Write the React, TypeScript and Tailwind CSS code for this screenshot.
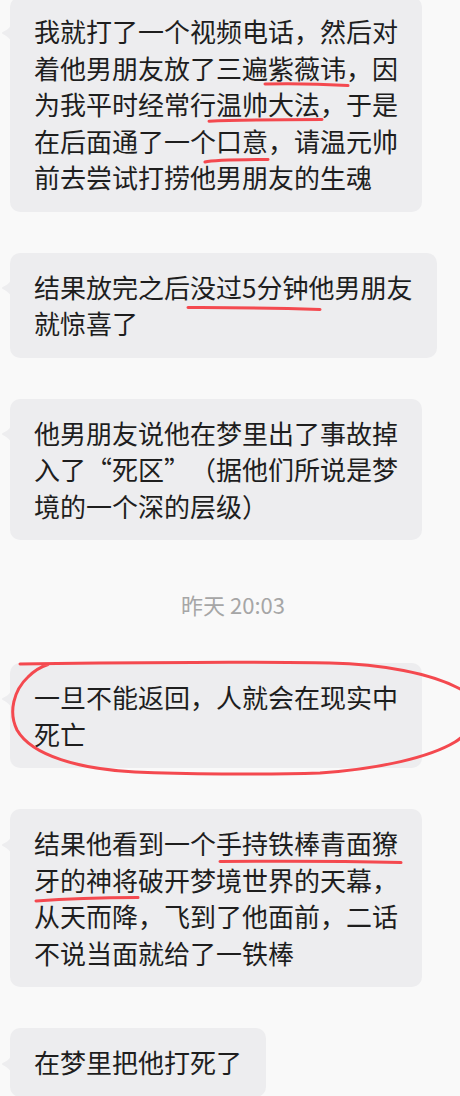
import React from "react";

const FONT = { fontFamily: '"Noto Sans CJK SC", "Noto Sans", sans-serif' };

function Tail() {
  return (
    <svg
      className="absolute left-[-9px] top-[27.5px]"
      width="10"
      height="16"
      viewBox="0 0 10 16"
    >
      <path
        d="M10 0 C 8 4, 4 6, 1.6 7.1 Q 0.4 8, 1.6 8.9 C 4 10, 8 12, 10 16 Z"
        fill="#ededef"
      />
    </svg>
  );
}

function Bubble({ lines, w }: { lines: string[]; w: string }) {
  return (
    <div
      className={`relative rounded-[10px] bg-[#ededef] px-6 py-4 text-[26px] leading-[36.5px] text-[#1e1e1e] ${w}`}
    >
      <Tail />
      {lines.map((l, i) => (
        <div key={i} className="whitespace-nowrap [text-spacing-trim:space-all]">
          {l}
        </div>
      ))}
    </div>
  );
}

export default function App() {
  return (
    <div
      lang="zh-CN"
      className="relative w-[460px] h-[1096px] overflow-hidden bg-[#f9f9f9]"
      style={FONT}
    >
      <div className="flex flex-col items-start gap-[41px] pl-[10px] mt-[-3px]">
        <Bubble
          w="w-[412px]"
          lines={[
            "我就打了一个视频电话，然后对",
            "着他男朋友放了三遍紫薇讳，因",
            "为我平时经常行温帅大法，于是",
            "在后面通了一个口意，请温元帅",
            "前去尝试打捞他男朋友的生魂",
          ]}
        />
        <Bubble
          w="w-[427px]"
          lines={["结果放完之后没过5分钟他男朋友", "就惊喜了"]}
        />
        <Bubble
          w="w-[412px]"
          lines={[
            "他男朋友说他在梦里出了事故掉",
            "入了“死区”（据他们所说是梦",
            "境的一个深的层级）",
          ]}
        />
        <div className="self-stretch pr-[4px] pt-[8px] pb-[3px] text-center text-[22px] leading-[30px] text-[#a6a6a6]">
          昨天 20:03
        </div>
        <Bubble
          w="w-[412px]"
          lines={["一旦不能返回，人就会在现实中", "死亡"]}
        />
        <Bubble
          w="w-[412px]"
          lines={[
            "结果他看到一个手持铁棒青面獠",
            "牙的神将破开梦境世界的天幕，",
            "从天而降，飞到了他面前，二话",
            "不说当面就给了一铁棒",
          ]}
        />
        <Bubble w="w-[256px]" lines={["在梦里把他打死了"]} />
      </div>

      <svg
        className="pointer-events-none absolute left-0 top-0"
        width="460"
        height="1096"
        viewBox="0 0 460 1096"
        fill="none"
        stroke="#f4494f"
        strokeLinecap="round"
        strokeLinejoin="round"
      >
        <path d="M265 84 Q 305 83 348 85.6" strokeWidth="3" />
        <path d="M209 121.3 Q 240 119.8 322 119.6" strokeWidth="3" />
        <path d="M205 162 Q 214 159.6 268 159.4" strokeWidth="3" />
        <path d="M188 307.6 Q 260 307.4 320 309.4" strokeWidth="3" />
        <path d="M220 861.6 Q 320 860.6 401 862.6" strokeWidth="3" />
        <path d="M36 901 Q 80 898 138 897.6" strokeWidth="3" />
        <path
          d="M20 664 C 120 662, 280 662, 330 663 C 380 664, 432 673, 462 690 C 478 700, 478 728, 455 742 C 430 757, 380 769, 320 773 C 260 775, 180 774, 135 772 C 80 769, 32 756, 17 730 C 8 712, 14 690, 28 677 C 34 671, 40 667, 48 664.5"
          strokeWidth="3"
        />
      </svg>
    </div>
  );
}
